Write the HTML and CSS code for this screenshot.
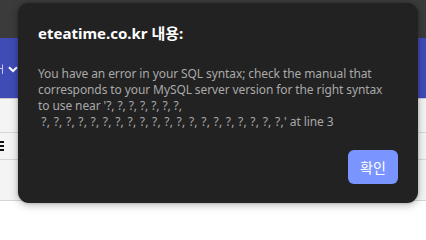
FILE: index.html
```html
<!DOCTYPE html>
<html lang="ko">
<head>
<meta charset="utf-8">
<link rel="stylesheet" href="styles.css">
</head>
<body>
<div class="page">
  <div class="topbar"></div>
  <div class="nav">
    <span class="nav-mark"></span>
    <svg class="chev" width="10" height="7" viewBox="0 0 10 7"><path d="M1 1.2 L5 5 L9 1.2" fill="none" stroke="#fff" stroke-width="2"/></svg>
  </div>
  <div class="row row-a"></div>
  <div class="row row-b"><span class="burger"><i></i><i></i><i></i></span></div>
  <div class="row row-c"></div>
  <div class="row row-d"></div>
</div>

<div class="dialog">
  <h1 class="title">eteatime.co.kr 내용:</h1>
  <p class="msg">You have an error in your SQL syntax; check the manual that
corresponds to your MySQL server version for the right syntax
to use near '?, ?, ?, ?, ?, ?, ?,
<span class="qs"> ?, ?, ?, ?, ?, ?, ?, ?, ?, ?, ?, ?, ?, ?, ?, ?, ?, ?, ?, ?,'</span> at line 3</p>
  <div class="actions"><button class="ok">확인</button></div>
</div>
</body>
</html>
```
FILE: styles.css
```css
html, body { margin: 0; padding: 0; }
body {
  width: 426px;
  height: 215px;
  overflow: hidden;
  position: relative;
  background: #ffffff;
  font-family: "Noto Sans", "Noto Sans CJK KR", sans-serif;
}
.page { display: flex; flex-direction: column; }
.topbar { height: 38px; background: #3b3b3b; }
.nav {
  height: 61px;
  background: #3f4cb6;
  border-bottom: 1px solid #c9c9cf;
  display: flex;
  align-items: center;
  gap: 5px;
  padding-top: 2px;
  box-sizing: border-box;
}
.nav-mark {
  display: block;
  width: 3px;
  height: 10px;
  border-right: 1px solid #c9c6f0;
  border-top: 1px solid transparent;
  box-sizing: border-box;
  position: relative;
}
.nav-mark::before {
  content: "";
  position: absolute;
  left: 0;
  top: 3px;
  width: 2px;
  height: 1px;
  background: #c9c6f0;
}
.chev { display: block; }
.row { background: #f4f4f4; border-bottom: 1px solid #d6d6d6; }
.row-a { height: 33px; }
.row-b { height: 26px; display: flex; align-items: center; }
.row-c { height: 40px; }
.row-d { height: 20px; background: #ffffff; border-bottom: 0; }
.burger { display: flex; flex-direction: column; gap: 2px; margin-left: -1px; }
.burger i { display: block; width: 5px; height: 2px; background: #111; }

.dialog {
  position: absolute;
  left: 18px;
  top: 3px;
  width: 400px;
  height: 200px;
  box-sizing: border-box;
  padding: 20px 20px 19px;
  background: #222222;
  border-radius: 11px;
  box-shadow: 0 2px 8px rgba(0,0,0,0.28), 0 0 3px rgba(0,0,0,0.2);
  display: flex;
  flex-direction: column;
}
.title {
  margin: 0;
  font-size: 15px;
  line-height: 20px;
  font-weight: 700;
  color: #ffffff;
}
.msg {
  margin: 23px 0 0;
  white-space: pre;
  font-size: 12px;
  line-height: 16px;
  letter-spacing: -0.1px;
  color: #a9a9a9;
}
.qs { letter-spacing: 0.25px; }
.actions { margin-top: auto; display: flex; justify-content: flex-end; }
.ok {
  width: 50px;
  height: 34px;
  border: 0;
  border-radius: 6px;
  background: #7a95ff;
  color: #ffffff;
  font-family: "Noto Sans CJK KR", sans-serif;
  font-size: 14px;
  padding: 0;
}
```
